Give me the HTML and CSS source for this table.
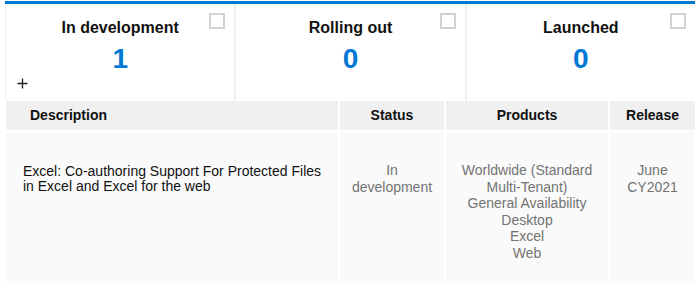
FILE: index.html
```html
<!DOCTYPE html>
<html lang="en">
<head>
<meta charset="utf-8">
<link rel="stylesheet" href="styles.css">
</head>
<body>
<div class="wrap">
  <div class="topbar"></div>
  <div class="cards">
    <div class="card">
      <div class="card-title">In development</div>
      <div class="card-num">1</div>
      <span class="check"></span>
      <svg class="plus" width="11" height="11" viewBox="0 0 11 11"><path d="M5.5 0.5v10M0.5 5.5h10" stroke="#1e1e1e" stroke-width="1.3" fill="none"/></svg>
    </div>
    <div class="card">
      <div class="card-title">Rolling out</div>
      <div class="card-num">0</div>
      <span class="check"></span>
    </div>
    <div class="card">
      <div class="card-title">Launched</div>
      <div class="card-num">0</div>
      <span class="check"></span>
    </div>
  </div>
  <div class="table">
    <div class="th th-left">Description</div>
    <div class="th">Status</div>
    <div class="th">Products</div>
    <div class="th">Release</div>
    <div class="td td-desc">Excel: Co-authoring Support For Protected Files in Excel and Excel for the web</div>
    <div class="td td-center">In development</div>
    <div class="td td-center">Worldwide (Standard Multi-Tenant)<br>General Availability<br>Desktop<br>Excel<br>Web</div>
    <div class="td td-center">June CY2021</div>
  </div>
</div>
</body>
</html>
```
FILE: styles.css
```css
html, body {
  margin: 0;
  padding: 0;
  background: #ffffff;
  font-family: "Liberation Sans", Arial, sans-serif;
}
.wrap {
  width: 690px;
  padding: 1px 5px 0 5px;
}
.topbar {
  height: 3px;
  background: #0078d4;
}
.cards {
  display: flex;
  gap: 2px;
  padding-left: 1px;
  background: #f0f0f0;
}
.card {
  position: relative;
  flex: 1;
  height: 96px;
  background: #ffffff;
  text-align: center;
}
.card-title {
  font-size: 16px;
  font-weight: bold;
  color: #111;
  line-height: 18px;
  padding-top: 15px;
}
.card-num {
  font-size: 28px;
  font-weight: bold;
  color: #0078d4;
  line-height: 32px;
  margin-top: 6px;
}
.check {
  position: absolute;
  top: 9px;
  right: 9px;
  width: 12px;
  height: 12px;
  border: 2px solid #d2d2d2;
  background: #fff;
}
.plus {
  position: absolute;
  left: 11px;
  top: 74px;
}
.table {
  display: grid;
  grid-template-columns: 332px 104px 162px 85px;
  column-gap: 2px;
  row-gap: 2px;
  padding-left: 1px;
  padding-top: 1px;
}
.th {
  background: #f0f0f0;
  height: 29px;
  line-height: 29px;
  font-size: 14px;
  font-weight: bold;
  color: #111;
  text-align: center;
}
.th-left {
  text-align: left;
  padding-left: 24px;
}
.td {
  background: #fafafa;
  height: 153px;
  box-sizing: border-box;
  font-size: 14px;
}
.td-desc {
  color: #111;
  line-height: 15px;
  padding: 32px 8px 0 17px;
}
.td-center {
  color: #737373;
  text-align: center;
  line-height: 16.5px;
  padding: 30px 8px 0 8px;
}
```
